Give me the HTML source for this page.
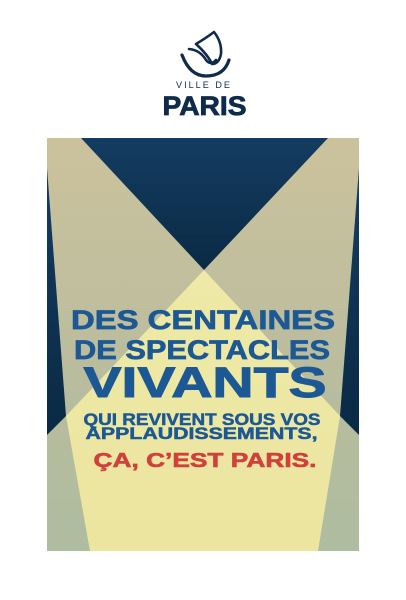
<!DOCTYPE html>
<html><head><meta charset="utf-8"><style>
html,body{margin:0;padding:0;background:#fff;width:406px;height:600px;overflow:hidden}
svg{display:block}
</style></head><body>
<svg width="406" height="600" viewBox="0 0 406 600" xmlns="http://www.w3.org/2000/svg">
<defs>
<linearGradient id="dk" x1="0" y1="0" x2="0" y2="1"><stop offset="0" stop-color="#143c62"/><stop offset="1" stop-color="#0a2a44"/></linearGradient>
<linearGradient id="tan" x1="0" y1="0" x2="0" y2="1"><stop offset="0" stop-color="#cbc29c"/><stop offset="0.6" stop-color="#b9bc9e"/><stop offset="1" stop-color="#aebc9f"/></linearGradient>
<linearGradient id="yl" x1="0" y1="0" x2="0" y2="1"><stop offset="0" stop-color="#eee9a6"/><stop offset="1" stop-color="#ebe5a0"/></linearGradient>
</defs>
<!-- logo -->
<g fill="none" stroke="#0f2b4b" stroke-linecap="round" stroke-linejoin="round">
<path d="M182 55 Q190 76 206 76 Q224 76 229 60" stroke-width="3.2"/>
<path d="M189 49 Q200 50 206 60 Q211 66 216 60" stroke-width="2.6"/>
<path d="M196 44 Q206 38 214 32 Q222 42 221 54 Q219 64 212 64 Q208 55 196 44 Z" stroke-width="2.6"/>
</g>
<text x="204" y="88" text-anchor="middle" font-family="Liberation Sans, sans-serif" font-size="9" fill="#0f2b4b" letter-spacing="2" textLength="56" lengthAdjust="spacingAndGlyphs">VILLE DE</text>
<text x="204.5" y="115" text-anchor="middle" font-family="Liberation Sans, sans-serif" font-weight="bold" font-size="27" fill="#0f2b4b" stroke="#0f2b4b" stroke-width="0.8" textLength="84" lengthAdjust="spacingAndGlyphs">PARIS</text>
<!-- poster -->
<rect x="47" y="138" width="312" height="413" fill="url(#tan)"/>
<polygon points="81,138 328,138 204,270" fill="url(#dk)"/>
<polygon points="47,168 66,416 47,435" fill="url(#dk)"/>
<polygon points="359,168 340,416 359,435" fill="url(#dk)"/>
<polygon points="204,270 340,416 318,551 90,551 66,416" fill="url(#yl)"/>
<g font-family="Liberation Sans, sans-serif" font-weight="bold" fill="#1c5893" stroke="#1c5893" stroke-width="0.7" text-anchor="middle">
<text x="203" y="329" font-size="27" textLength="264" lengthAdjust="spacingAndGlyphs">DES CENTAINES</text>
<text x="202" y="359" font-size="27" textLength="256" lengthAdjust="spacingAndGlyphs">DE SPECTACLES</text>
<text x="205" y="397" font-size="43" stroke-width="1" textLength="243" lengthAdjust="spacingAndGlyphs">VIVANTS</text>
<text x="202" y="425" font-size="16.5" stroke-width="0.5" textLength="237" lengthAdjust="spacingAndGlyphs">QUI REVIVENT SOUS VOS</text>
<text x="201.5" y="439" font-size="16.5" stroke-width="0.5" textLength="232" lengthAdjust="spacingAndGlyphs">APPLAUDISSEMENTS,</text>
<text x="205" y="467" font-size="20" fill="#d0413b" stroke="#d0413b" stroke-width="0.6" textLength="223" lengthAdjust="spacingAndGlyphs">ÇA, C’EST PARIS.</text>
</g>
</svg>
</body></html>
